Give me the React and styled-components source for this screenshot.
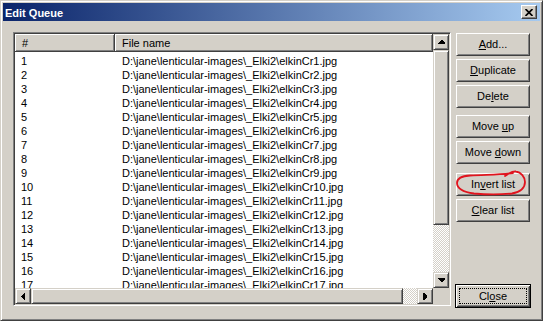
import React from "react";
import styled, { createGlobalStyle } from "styled-components";

const FACE = "#d4d0c8";
const SHADOW = "#808080";
const DARK = "#404040";
const HL = "#ffffff";

const Global = createGlobalStyle`
  html, body { margin: 0; padding: 0; background: ${FACE}; }
  body { font-family: "Liberation Sans", Arial, sans-serif; font-size: 11px; color: #000; }
  * { box-sizing: border-box; }
`;

const Window = styled.div`
  position: relative;
  width: 543px;
  height: 321px;
  background: ${FACE};
  border-style: solid;
  border-width: 1px;
  border-color: ${FACE} ${DARK} ${DARK} ${FACE};
  box-shadow: inset 1px 1px ${HL}, inset -1px -1px ${SHADOW};
  padding: 2px;
  display: flex;
  flex-direction: column;
`;

const TitleBar = styled.div`
  height: 18px;
  flex: none;
  display: flex;
  align-items: flex-start;
  padding-left: 2px;
  background: linear-gradient(to right, #0a246a, #a6caf0);
`;

const TitleText = styled.div`
  margin-top: 4px;
  line-height: 13px;
  font-weight: bold;
  font-size: 11px;
  color: #fff;
`;

const CloseBox = styled.div`
  margin-left: auto;
  margin-top: 2px;
  margin-right: 3px;
  width: 16px;
  height: 14px;
  background: ${FACE};
  border: 1px solid;
  border-color: ${HL} ${DARK} ${DARK} ${HL};
  box-shadow: inset -1px -1px ${SHADOW};
  display: flex;
  align-items: center;
  justify-content: center;
  padding-right: 1px;
`;

const Content = styled.div`
  display: flex;
  padding: 11px 0 0 10px;
`;

const ListBox = styled.div`
  width: 438px;
  height: 274px;
  flex: none;
  border: 1px solid;
  border-color: ${SHADOW} ${HL} ${HL} ${SHADOW};
  box-shadow: inset 1px 1px ${DARK}, inset -1px -1px ${FACE};
  padding: 1px;
  background: #fff;
  display: grid;
  grid-template-columns: 1fr 16px;
  grid-template-rows: 1fr 16px;
`;

const Pane = styled.div`
  display: flex;
  flex-direction: column;
  overflow: hidden;
  min-height: 0;
`;

const Header = styled.div`
  display: flex;
  height: 18px;
  flex: none;
`;

const HeaderCell = styled.div`
  ${(p) => (p.$width ? `width: ${p.$width}px; flex: none;` : "flex: 1;")}
  height: 18px;
  background: ${FACE};
  border-right: 1px solid ${DARK};
  border-bottom: 1px solid ${DARK};
  box-shadow: inset 1px 1px ${HL}, inset -1px -1px ${SHADOW};
  padding: 1px 0 0 7px;
  line-height: 16px;
  white-space: nowrap;
`;

const Rows = styled.div`
  flex: 1;
  overflow: hidden;
`;

const Row = styled.div`
  display: flex;
  height: 14px;
  padding-top: 2px;
  line-height: 14px;
  white-space: nowrap;
`;

const Cell = styled.div`
  ${(p) => (p.$width ? `width: ${p.$width}px; flex: none;` : "flex: 1;")}
  padding-left: ${(p) => p.$pad}px;
`;

const raised = `
  background: ${FACE};
  border: 1px solid;
  border-color: ${FACE} ${DARK} ${DARK} ${FACE};
  box-shadow: inset 1px 1px ${HL}, inset -1px -1px ${SHADOW};
`;

const VScroll = styled.div`
  display: flex;
  flex-direction: column;
  min-height: 0;
`;

const HScroll = styled.div`
  display: flex;
  flex-direction: row;
`;

const ScrollBtn = styled.div`
  ${raised}
  width: 16px;
  height: 16px;
  flex: none;
  display: flex;
  align-items: center;
  justify-content: center;
`;

const Thumb = styled.div`
  ${raised}
  flex: none;
  ${(p) => (p.$vertical ? `width: 16px; height: ${p.$size}px;` : `height: 16px; width: ${p.$size}px;`)}
`;

const Track = styled.div`
  flex: 1;
  background: repeating-conic-gradient(${FACE} 0% 25%, #ffffff 0% 50%) 0 0 / 2px 2px;
`;

const Corner = styled.div`
  background: ${FACE};
`;

const ButtonColumn = styled.div`
  width: 76px;
  margin-left: 4px;
  padding-top: 1px;
  display: flex;
  flex-direction: column;
`;

const Button = styled.div`
  height: 23px;
  margin: ${(p) => p.$gap || 0}px 1px 0 1px;
  background: ${FACE};
  border: 1px solid;
  border-color: ${HL} ${DARK} ${DARK} ${HL};
  box-shadow: inset 1px 1px ${FACE}, inset -1px -1px ${SHADOW};
  display: flex;
  align-items: center;
  justify-content: center;
  font-size: 11px;
  line-height: 13px;
  white-space: nowrap;
`;

const DefaultButton = styled.div`
  height: 24px;
  margin-top: ${(p) => p.$gap}px;
  background: ${FACE};
  border: 1px solid #000;
  box-shadow: inset 1px 1px ${HL}, inset -1px -1px ${DARK}, inset 2px 2px ${FACE}, inset -2px -2px ${SHADOW};
  outline: 1px dotted #000;
  outline-offset: -5px;
  display: flex;
  align-items: center;
  justify-content: center;
  font-size: 11px;
  line-height: 13px;
`;

const Annotation = styled.svg`
  position: absolute;
  left: 449px;
  top: 164px;
  pointer-events: none;
`;

const Arrow = ({ dir }) => {
  const pts = {
    up: "3,0 4,0 7,3 7,4 0,4 0,3",
    down: "0,0 7,0 7,1 4,4 3,4 0,1",
    left: "4,0 4,7 3,7 0,4 0,3 3,0",
    right: "0,0 1,0 4,3 4,4 1,7 0,7",
  }[dir];
  const vert = dir === "up" || dir === "down";
  return (
    <svg width={vert ? 7 : 4} height={vert ? 4 : 7} shapeRendering="crispEdges">
      <polygon points={pts} fill="#000" />
    </svg>
  );
};

const files = Array.from({ length: 17 }, (_, i) => ({
  n: i + 1,
  name: `D:\\jane\\lenticular-images\\_Elki2\\elkinCr${i + 1}.jpg`,
}));

export default function App() {
  return (
    <>
      <Global />
      <Window>
        <TitleBar>
          <TitleText>Edit Queue</TitleText>
          <CloseBox>
            <svg width="8" height="7" viewBox="0 0 8 7">
              <path d="M0.5 0 L7.5 7 M7.5 0 L0.5 7" stroke="#000" strokeWidth="1.7" />
            </svg>
          </CloseBox>
        </TitleBar>
        <Content>
          <ListBox>
            <Pane>
              <Header>
                <HeaderCell $width={100}>#</HeaderCell>
                <HeaderCell>File name</HeaderCell>
              </Header>
              <Rows>
                {files.map((f) => (
                  <Row key={f.n}>
                    <Cell $width={100} $pad={6}>{f.n}</Cell>
                    <Cell $pad={7}>{f.name}</Cell>
                  </Row>
                ))}
              </Rows>
            </Pane>
            <VScroll>
              <ScrollBtn><Arrow dir="up" /></ScrollBtn>
              <Thumb $vertical $size={175} />
              <Track />
              <ScrollBtn><Arrow dir="down" /></ScrollBtn>
            </VScroll>
            <HScroll>
              <ScrollBtn><Arrow dir="left" /></ScrollBtn>
              <Thumb $size={372} />
              <Track />
              <ScrollBtn><Arrow dir="right" /></ScrollBtn>
            </HScroll>
            <Corner />
          </ListBox>
          <ButtonColumn>
            <Button><span><u>A</u>dd...</span></Button>
            <Button $gap={3}><span><u>D</u>uplicate</span></Button>
            <Button $gap={3}><span>De<u>l</u>ete</span></Button>
            <Button $gap={7}><span>Move <u>u</u>p</span></Button>
            <Button $gap={3}><span>Move <u>d</u>own</span></Button>
            <Button $gap={9}><span>In<u>v</u>ert list</span></Button>
            <Button $gap={3}><span><u>C</u>lear list</span></Button>
            <DefaultButton $gap={62}><span>Cl<u>o</u>se</span></DefaultButton>
          </ButtonColumn>
        </Content>
        <Annotation width="85" height="36" viewBox="0 0 85 36">
          <path
            d="M55 11 C58 9, 62 6, 66 6.5 C71 7, 75 12, 75 17 C75 23, 70 27, 62 28.5 C52 29.5, 35 29.5, 24 28.5 C13 27, 7 23, 7 18 C7 13, 12 11, 20 10.5 C35 9.5, 50 10, 63 8"
            fill="none"
            stroke="#e0141e"
            strokeWidth="1.8"
            strokeLinecap="round"
          />
        </Annotation>
      </Window>
    </>
  );
}
